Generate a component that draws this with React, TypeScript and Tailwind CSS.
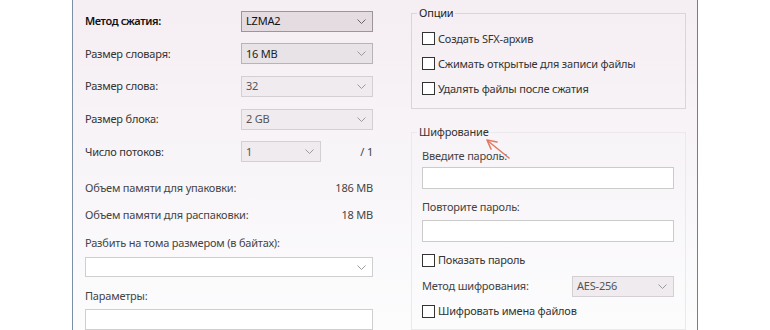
import type { ReactNode } from "react";

const font = { fontFamily: '"Noto Sans", "Open Sans", sans-serif' };

const Chevron = ({ color = "#8a8a8a" }: { color?: string }) => (
  <svg width="9" height="5" viewBox="0 0 9 5" className="shrink-0">
    <path d="M0.5 0.5 L4.5 4.5 L8.5 0.5" fill="none" stroke={color} strokeWidth="1" />
  </svg>
);

// Windows style combobox
const Combo = ({
  value,
  className,
  tone = "light",
}: {
  value?: string;
  className: string;
  tone?: "focus" | "normal" | "light" | "white";
}) => {
  const tones = {
    focus: "bg-[#e4dce1] border-[#9c9599] text-[#111]",
    normal: "bg-[#e8e3e6] border-[#b9b3b7] text-[#222]",
    light: "bg-[#efebee] border-[#d3cfd2] text-[#555]",
    white: "bg-white border-[#cfcfcf] text-[#555]",
  };
  return (
    <div
      className={`flex items-center justify-between border pl-[4px] pr-[6px] ${tones[tone]} ${className}`}
    >
      <span>{value}</span>
      <Chevron color={tone === "focus" ? "#666" : "#9a9a9a"} />
    </div>
  );
};

const Row = ({ label, children, strong }: { label: string; children: ReactNode; strong?: boolean }) => (
  <div className="flex h-[34.5px] items-center">
    <span
      className={`w-[156px] shrink-0 ${strong ? "font-semibold tracking-[-0.4px] text-[#111]" : "text-[#333]"}`}
    >
      {label}
    </span>
    {children}
  </div>
);

const Check = ({ label, className = "" }: { label: string; className?: string }) => (
  <div className={`flex items-center ${className}`}>
    <div className="h-[13px] w-[13px] shrink-0 border border-[#333] bg-white" />
    <span className="ml-[3px] text-[#333]">{label}</span>
  </div>
);

export default function App() {
  return (
    <div
      className="relative h-[330px] w-[770px] overflow-hidden bg-white text-[11px] leading-[16px] tracking-[-0.2px]"
      style={font}
    >
      <div className="ml-[72px] flex h-full w-[626px] border-l border-r border-l-[#7d8fa6] border-r-[#5f83ad] bg-gradient-to-b from-[#f5eef3] via-[#f8f5f8] to-[#fcfcfd]">
        {/* left column */}
        <div className="ml-[12px] flex w-[288px] flex-col pt-[5px]">
          <Row label="Метод сжатия:" strong>
            <Combo value="LZMA2" tone="focus" className="h-[21px] w-[132px]" />
          </Row>
          <Row label="Размер словаря:">
            <Combo value="16 MB" tone="normal" className="h-[21px] w-[132px]" />
          </Row>
          <Row label="Размер слова:">
            <Combo value="32" className="h-[21px] w-[132px]" />
          </Row>
          <Row label="Размер блока:">
            <Combo value="2 GB" className="h-[21px] w-[132px]" />
          </Row>
          <Row label="Число потоков:">
            <Combo value="1" className="h-[21px] w-[80px]" />
            <span className="ml-auto text-[#444]">/ 1</span>
          </Row>
          <div className="mt-[9px] flex h-[24px] items-center justify-between text-[#444]">
            <span>Объем памяти для упаковки:</span>
            <span>186 MB</span>
          </div>
          <div className="mt-[4px] flex h-[24px] items-center justify-between text-[#444]">
            <span>Объем памяти для распаковки:</span>
            <span>18 MB</span>
          </div>
          <div className="mt-[9px] text-[#444]">Разбить на тома размером (в байтах):</div>
          <Combo tone="white" className="mt-[6px] h-[21px] w-full" />
          <div className="mt-[11px] text-[#444]">Параметры:</div>
          <div className="mt-[5px] h-[22px] w-full border border-[#cfcfcf] bg-white" />
        </div>

        {/* right column */}
        <div className="ml-[38px] flex w-[275px] flex-col pt-[5px]">
          <fieldset className="h-[104px] border border-[#d9d5d8]">
            <legend className="ml-[5px] px-[2px] text-[#222]">Опции</legend>
            <div className="flex flex-col px-[10px] pt-[5px]">
              <Check label="Создать SFX-архив" className="h-[25px]" />
              <Check label="Сжимать открытые для записи файлы" className="h-[25px]" />
              <Check label="Удалять файлы после сжатия" className="h-[25px]" />
            </div>
          </fieldset>

          <fieldset className="mt-[15px] flex-1 border border-[#ebe9eb]">
            <legend className="ml-[5px] px-[2px] text-[#333]">Шифрование</legend>
            <div className="flex flex-col pl-[10px] pr-[11px] pt-[8px]">
              <span className="text-[#444]">Введите пароль:</span>
              <div className="mt-[3px] h-[22px] w-full border border-[#cbcbcb] bg-white" />
              <span className="mt-[10px] text-[#444]">Повторите пароль:</span>
              <div className="mt-[5px] h-[22px] w-full border border-[#cbcbcb] bg-white" />
              <Check label="Показать пароль" className="mt-[8px] h-[20px]" />
              <div className="mt-[6px] flex h-[20px] items-center justify-between">
                <span className="text-[#444]">Метод шифрования:</span>
                <Combo value="AES-256" className="h-[21px] w-[102px]" />
              </div>
              <Check label="Шифровать имена файлов" className="mt-[5px] h-[20px]" />
            </div>
          </fieldset>
        </div>
      </div>

      {/* annotation arrow */}
      <svg className="pointer-events-none absolute left-[480px] top-[134px]" width="34" height="30" viewBox="0 0 34 30">
        <path d="M29 24 L8 7" stroke="#e37a62" strokeWidth="1.6" fill="none" strokeLinecap="round" />
        <path d="M7 6 L17 8 M7 6 L11 15" stroke="#e37a62" strokeWidth="1.6" fill="none" strokeLinecap="round" />
      </svg>
    </div>
  );
}
